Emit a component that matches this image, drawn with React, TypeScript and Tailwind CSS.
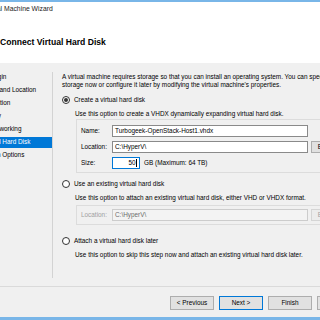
import React from "react";

const navItems: { label: string; ml: string; selected?: boolean }[] = [
  { label: "Before You Begin", ml: "ml-[-43px]" },
  { label: "Specify Name and Location", ml: "ml-[-42px]" },
  { label: "Specify Generation", ml: "ml-[-44px]" },
  { label: "Assign Memory", ml: "ml-[-43px]" },
  { label: "Configure Networking", ml: "ml-[-40px]" },
  { label: "Connect Virtual Hard Disk", ml: "ml-[-43px]", selected: true },
  { label: "Installation Options", ml: "ml-[-30px]" },
  { label: "Summary", ml: "ml-[-43px]" },
];

function Radio({ checked }: { checked?: boolean }) {
  return (
    <div className="w-[8px] h-[8px] rounded-full border border-[#333333] bg-white flex items-center justify-center shrink-0">
      {checked && <div className="w-[4px] h-[4px] rounded-full bg-[#333333]" />}
    </div>
  );
}

function Btn({ label, primary }: { label: string; primary?: boolean }) {
  return (
    <div
      className={
        "w-[44px] h-[14px] shrink-0 flex items-center justify-center bg-[#e1e1e1] border " +
        (primary ? "border-[#0078d7]" : "border-[#adadad]")
      }
    >
      {label}
    </div>
  );
}

export default function App() {
  return (
    <div className="w-[320px] h-[320px] overflow-hidden bg-[#f0f0f0] flex flex-col font-['Liberation_Sans',Arial,sans-serif] text-[6.4px] text-black">
      <div className="h-[2px] bg-[#79b6e8] shrink-0" />
      <div className="h-[15px] bg-white flex items-center shrink-0 overflow-hidden whitespace-nowrap">
        <span className="ml-[-32.5px] text-[6.8px] text-[#222]">New Virtual Machine Wizard</span>
      </div>
      <div className="h-[46px] bg-white shrink-0 pt-[19.5px] whitespace-nowrap">
        <div className="text-[8.6px] font-bold leading-[10px]">Connect Virtual Hard Disk</div>
      </div>
      <div className="h-[223px] shrink-0 flex">
        <div className="w-[52px] shrink-0 pt-[7.5px] flex flex-col">
          {navItems.map((n) => (
            <div key={n.label} className="h-[13px] flex items-center overflow-hidden whitespace-nowrap">
              <div
                className={
                  "w-full h-[11px] flex items-center overflow-hidden " +
                  (n.selected ? "bg-[#0078d7] text-white" : "")
                }
              >
                <span className={n.ml + " shrink-0"}>{n.label}</span>
              </div>
            </div>
          ))}
        </div>
        <div className="w-[1px] shrink-0 mt-[9px] mb-[8px] bg-[#d3d3d3]" />
        <div className="flex-1 pl-[9px] pt-[10px] flex flex-col whitespace-nowrap min-w-0">
          <div className="leading-[8px]">
            <div>A virtual machine requires storage so that you can install an operating system. You can specify the</div>
            <div>storage now or configure it later by modifying the virtual machine's properties.</div>
          </div>
          <div className="mt-[6px] h-[10px] flex items-center gap-[4px]">
            <Radio checked />
            <span>Create a virtual hard disk</span>
          </div>
          <div className="mt-[3.5px] h-[9px] leading-[9px] ml-[13px]">
            Use this option to create a VHDX dynamically expanding virtual hard disk.
          </div>
          <div className="mt-[1.5px] ml-[14px] w-[290px] shrink-0 border border-[#dcdcdc] pt-[5px] pb-[3px] pl-[4px] flex flex-col gap-[4px]">
            <div className="h-[12px] flex items-center">
              <span className="w-[31px] shrink-0">Name:</span>
              <div className="w-[196px] shrink-0 h-[12px] bg-white border border-[#8a8a8a] flex items-center pl-[2px]">
                Turbogeek-OpenStack-Host1.vhdx
              </div>
            </div>
            <div className="h-[12px] flex items-center">
              <span className="w-[31px] shrink-0">Location:</span>
              <div className="w-[196px] shrink-0 h-[12px] bg-white border border-[#8a8a8a] flex items-center pl-[2px]">
                C:\HyperV\
              </div>
              <div className="ml-[3px] w-[40px] h-[12px] bg-[#e1e1e1] border border-[#adadad] flex items-center justify-center shrink-0">
                Browse...
              </div>
            </div>
            <div className="h-[12px] flex items-center">
              <span className="w-[31px] shrink-0">Size:</span>
              <div className="w-[28px] shrink-0 h-[12px] bg-white border border-[#0078d7] flex items-center justify-end pr-[2px]">
                50<span className="w-[1px] h-[8px] bg-black ml-[0.5px]" />
              </div>
              <span className="ml-[4px]">GB (Maximum: 64 TB)</span>
            </div>
          </div>
          <div className="mt-[6px] h-[10px] flex items-center gap-[4px]">
            <Radio />
            <span>Use an existing virtual hard disk</span>
          </div>
          <div className="mt-[3.5px] h-[9px] leading-[9px] ml-[13px]">
            Use this option to attach an existing virtual hard disk, either VHD or VHDX format.
          </div>
          <div className="mt-[3.5px] ml-[14px] w-[290px] shrink-0 border border-[#dcdcdc] pt-[3px] pb-[3px] pl-[4px] flex flex-col">
            <div className="h-[12px] flex items-center">
              <span className="w-[31px] shrink-0 text-[#a0a0a0]">Location:</span>
              <div className="w-[196px] shrink-0 h-[12px] bg-[#f3f3f3] border border-[#cccccc] flex items-center pl-[2px] text-[#6d6d6d]">
                C:\HyperV\
              </div>
              <div className="ml-[3px] w-[40px] h-[12px] bg-[#ececec] border border-[#d5d5d5] flex items-center justify-center shrink-0 text-[#a0a0a0]">
                Browse...
              </div>
            </div>
          </div>
          <div className="mt-[11px] h-[10px] flex items-center gap-[4px]">
            <Radio />
            <span>Attach a virtual hard disk later</span>
          </div>
          <div className="mt-[3.5px] h-[9px] leading-[9px] ml-[13px]">
            Use this option to skip this step now and attach an existing virtual hard disk later.
          </div>
        </div>
      </div>
      <div className="h-[1px] bg-[#dadada] shrink-0" />
      <div className="h-[30px] shrink-0 pt-[9px] pl-[170px] flex items-start gap-[5px] whitespace-nowrap">
        <Btn label="< Previous" />
        <Btn label="Next >" primary />
        <Btn label="Finish" />
        <Btn label="Cancel" />
      </div>
      <div className="h-[3px] bg-[#79b6e8] shrink-0" />
    </div>
  );
}
